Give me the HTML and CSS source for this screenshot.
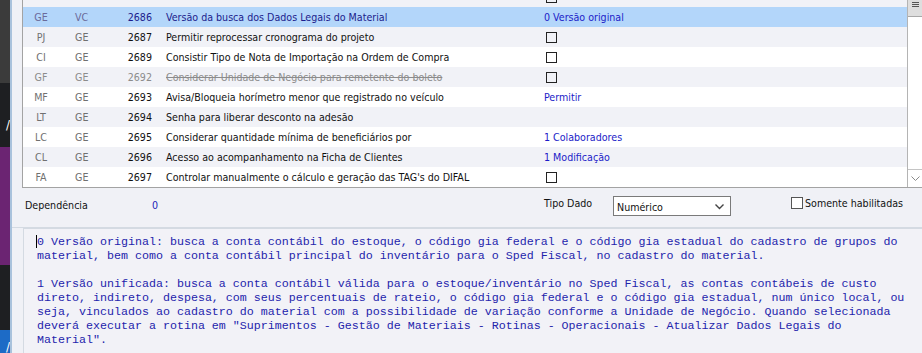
FILE: index.html
```html
<!DOCTYPE html>
<html lang="pt-BR">
<head>
    <meta charset="UTF-8">
    <title>Parâmetros</title>
    <link rel="stylesheet" href="styles.css">
</head>
<body>
    <div class="strip">
        <div class="seg seg-gray"></div>
        <div class="seg seg-dark seg-a"><span class="mark">/</span></div>
        <div class="seg seg-purple"></div>
        <div class="seg seg-dark seg-b"></div>
        <div class="seg seg-blue"><span class="mark">/</span></div>
    </div>

    <div class="panel">
        <div class="grid">
            <div class="rows">
                <div class="row alt first">
                    <span class="c1"></span><span class="c2"></span><span class="c3"></span><span class="c4"></span>
                    <span class="c5"><i class="chk"></i></span>
                </div>
                <div class="row sel">
                    <span class="c1">GE</span><span class="c2">VC</span><span class="c3">2686</span>
                    <span class="c4">Versão da busca dos Dados Legais do Material</span>
                    <span class="c5 val">0 Versão original</span>
                </div>
                <div class="row alt">
                    <span class="c1">PJ</span><span class="c2">GE</span><span class="c3">2687</span>
                    <span class="c4">Permitir reprocessar cronograma do projeto</span>
                    <span class="c5"><i class="chk"></i></span>
                </div>
                <div class="row">
                    <span class="c1">CI</span><span class="c2">GE</span><span class="c3">2689</span>
                    <span class="c4">Consistir Tipo de Nota de Importação na Ordem de Compra</span>
                    <span class="c5"><i class="chk"></i></span>
                </div>
                <div class="row alt off">
                    <span class="c1">GF</span><span class="c2">GE</span><span class="c3">2692</span>
                    <span class="c4">Considerar Unidade de Negócio para remetente do boleto</span>
                    <span class="c5"><i class="chk"></i></span>
                </div>
                <div class="row">
                    <span class="c1">MF</span><span class="c2">GE</span><span class="c3">2693</span>
                    <span class="c4">Avisa/Bloqueia horímetro menor que registrado no veículo</span>
                    <span class="c5 val">Permitir</span>
                </div>
                <div class="row alt">
                    <span class="c1">LT</span><span class="c2">GE</span><span class="c3">2694</span>
                    <span class="c4">Senha para liberar desconto na adesão</span>
                    <span class="c5"></span>
                </div>
                <div class="row">
                    <span class="c1">LC</span><span class="c2">GE</span><span class="c3">2695</span>
                    <span class="c4">Considerar quantidade mínima de beneficiários por</span>
                    <span class="c5 val">1 Colaboradores</span>
                </div>
                <div class="row alt">
                    <span class="c1">CL</span><span class="c2">GE</span><span class="c3">2696</span>
                    <span class="c4">Acesso ao acompanhamento na Ficha de Clientes</span>
                    <span class="c5 val">1 Modificação</span>
                </div>
                <div class="row">
                    <span class="c1">FA</span><span class="c2">GE</span><span class="c3">2697</span>
                    <span class="c4">Controlar manualmente o cálculo e geração das TAG's do DIFAL</span>
                    <span class="c5"><i class="chk"></i></span>
                </div>
            </div>
            <div class="vscroll">
                <div class="thumb">
                    <svg width="7" height="6" viewBox="0 0 7 6"><path d="M0 0.5H7M0 2.5H7M0 4.5H7" stroke="#555" stroke-width="1"/></svg>
                </div>
                <div class="track"></div>
                <div class="arrow">
                    <svg width="9" height="6" viewBox="0 0 9 6"><path d="M0.5 0.5L4.5 4.5L8.5 0.5" fill="none" stroke="#8a8a8a" stroke-width="1"/></svg>
                </div>
            </div>
        </div>

        <div class="filters">
            <span class="lbl-dep">Dependência</span>
            <span class="dep-val">0</span>
            <span class="lbl-tipo">Tipo Dado</span>
            <div class="select">
                <span>Numérico</span>
                <svg width="9" height="6" viewBox="0 0 9 6"><path d="M0.5 0.5L4.5 4.5L8.5 0.5" fill="none" stroke="#444" stroke-width="1.4"/></svg>
            </div>
            <label class="only"><i class="chk big"></i>Somente habilitadas</label>
        </div>

        <div class="memo">
<pre><span class="caret"></span>0 Versão original: busca a conta contábil do estoque, o código gia federal e o código gia estadual do cadastro de grupos do
material, bem como a conta contábil principal do inventário para o Sped Fiscal, no cadastro do material.

1 Versão unificada: busca a conta contábil válida para o estoque/inventário no Sped Fiscal, as contas contábeis de custo
direto, indireto, despesa, com seus percentuais de rateio, o código gia federal e o código gia estadual, num único local, ou
seja, vinculados ao cadastro do material com a possibilidade de variação conforme a Unidade de Negócio. Quando selecionada
deverá executar a rotina em "Suprimentos - Gestão de Materiais - Rotinas - Operacionais - Atualizar Dados Legais do
Material".</pre>
        </div>
    </div>
</body>
</html>
```

FILE: styles.css
```css
html, body {
    margin: 0;
    padding: 0;
    height: 100%;
    overflow: hidden;
}
body {
    display: flex;
    background: #f0f1f6;
    font-family: "DejaVu Sans Condensed", "DejaVu Sans", sans-serif;
    font-size: 10.6px;
    color: #111;
}

/* left edge of the desktop behind the window */
.strip {
    width: 10px;
    flex: none;
    display: flex;
    flex-direction: column;
    border-right: 2px solid #a9c2dc;
}
.seg {
    position: relative;
    overflow: hidden;
}
.seg-gray { height: 83px; background: #3b3b3b; }
.seg-dark { background: #1e1f22; }
.seg-a { height: 64px; }
.seg-b { height: 65px; }
.seg-purple { height: 118px; background: #6b2472; }
.seg-blue { flex: 1; background: #1d6bc6; }
.mark {
    position: absolute;
    right: 0;
    bottom: 14px;
    color: #fff;
    font-size: 13px;
    line-height: 16px;
}
.seg-blue .mark { bottom: -2px; }

.panel {
    flex: 1;
    display: flex;
    flex-direction: column;
    min-width: 0;
}

/* grid */
.grid {
    margin-left: 10px;
    height: 187px;
    display: flex;
    border-left: 1px solid #a3a3a3;
    border-bottom: 1px solid #a3a3a3;
    background: #fff;
}
.rows {
    flex: 1;
    overflow: hidden;
}
.row {
    display: grid;
    grid-template-columns: 36px 51px 48px 382px 1fr;
    height: 20px;
    line-height: 20px;
    background: #fff;
    white-space: nowrap;
}
.row.first { margin-top: -13px; }
.row.alt { background: #f1f2f7; }
.row.sel { background: #b3d6fa; color: #1c1c8c; }
.c1 { text-align: center; color: #707070; }
.c2 { padding-left: 16px; color: #707070; }
.c3 { text-align: right; padding-right: 6px; }
.c4 { padding-left: 8px; overflow: hidden; }
.c5 { padding-left: 4px; display: flex; align-items: center; }
.val { color: #1c1cc8; }
.sel .c1, .sel .c2 { color: #6b6b9a; }
.sel .c3, .sel .c4 { color: #1c1c8c; }
.off span { color: #8c8c8c; }
.off .c4 { text-decoration: line-through; }

.chk {
    display: inline-block;
    width: 9px;
    height: 9px;
    border: 1px solid #222;
    margin-left: 2px;
}
.chk.big {
    width: 10px;
    height: 10px;
    border-color: #555;
    background: #fff;
    margin: 0 2px 0 0;
}

.vscroll {
    width: 14px;
    flex: none;
    border-left: 1px solid #b4b4b4;
    display: flex;
    flex-direction: column;
    background: #fff;
}
.thumb {
    height: 17px;
    background: #dedede;
    border-bottom: 1px solid #a8a8a8;
    display: flex;
    justify-content: center;
    padding-top: 2px;
    box-sizing: border-box;
}
.track { flex: 1; }
.arrow {
    height: 17px;
    border-top: 1px solid #c4c4c4;
    display: flex;
    align-items: center;
    justify-content: center;
}

/* filters */
.filters {
    height: 40px;
    display: flex;
    align-items: flex-start;
    padding-left: 13px;
    border-bottom: 1px solid #d4dae2;
    box-sizing: border-box;
    line-height: 14px;
}
.lbl-dep { width: 127px; margin-top: 10px; }
.dep-val { width: 392px; margin-top: 10px; color: #2323b8; }
.lbl-tipo { width: 69px; margin-top: 8px; }
.select {
    width: 118px;
    height: 20px;
    box-sizing: border-box;
    border: 1px solid #7a7a7a;
    background: #fff;
    display: flex;
    align-items: center;
    justify-content: space-between;
    padding: 2px 6px 0 3px;
    margin-top: 8px;
}
.only {
    margin-left: 60px;
    margin-top: 8px;
    display: flex;
    align-items: center;
}

/* memo */
.memo {
    flex: 1;
    margin-left: 11px;
    border-left: 1px solid #d4dae2;
    border-top: 1px solid #d4dae2;
    padding: 6px 0 0 13px;
    background: #f2f2f7;
}
.memo pre {
    margin: 0;
    font-family: "Liberation Mono", "Courier New", monospace;
    font-size: 11.67px;
    line-height: 14px;
    color: #2424ac;
}
.caret {
    display: inline-block;
    width: 0;
    height: 13px;
    border-left: 1px solid #000;
    vertical-align: -3px;
    margin-left: -1px;
}
```
